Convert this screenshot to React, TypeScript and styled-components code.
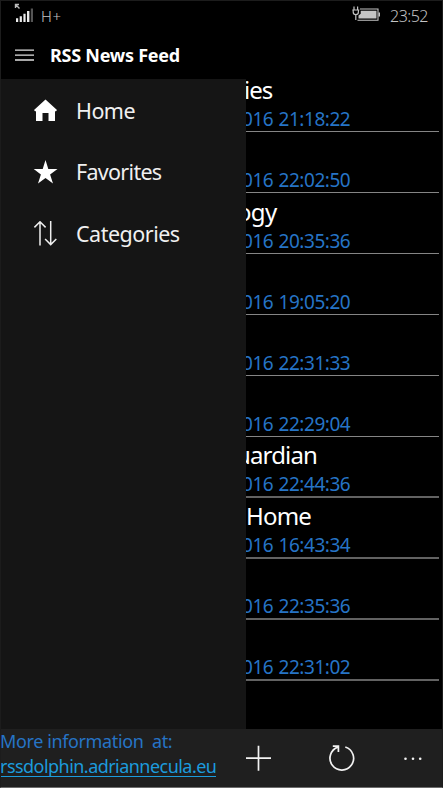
import React from "react";
import styled, { createGlobalStyle } from "styled-components";

const Global = createGlobalStyle`
  * { box-sizing: border-box; }
  body { margin: 0; background: #000; }
`;

const Phone = styled.div`
  width: 443px;
  height: 788px;
  display: flex;
  flex-direction: column;
  overflow: hidden;
  background: #000;
  color: #fff;
  border: 1px solid #1c1c1c;
  border-bottom-color: #6c6c6c;
  font-family: "Noto Sans", "Open Sans", sans-serif;
  white-space: pre;
`;

const StatusBar = styled.header`
  height: 29px;
  flex: none;
  display: flex;
  align-items: flex-start;
  padding: 2px 14px 0 13px;
  color: #c4c4c4;
`;

const StatusText = styled.span<{ $size: number; $spacing: number; $indent: number }>`
  font-size: ${(p) => p.$size}px;
  letter-spacing: ${(p) => p.$spacing}px;
  margin-left: ${(p) => p.$indent}px;
  line-height: 26px;
  font-weight: 300;
`;

const Spacer = styled.div`
  flex: 1;
`;

const TitleBar = styled.div`
  height: 49px;
  flex: none;
  display: flex;
  align-items: center;
  padding-left: 14px;
  gap: 15px;
`;

const Title = styled.h1`
  margin: 0;
  font-size: 18px;
  line-height: 26px;
  font-weight: 700;
  letter-spacing: -0.25px;
`;

const Body = styled.main`
  height: 650px;
  flex: none;
  display: flex;
`;

const Drawer = styled.nav`
  width: 245px;
  flex: none;
  background: #151515;
  padding-top: 1px;
`;

const MenuItem = styled.div`
  height: 61.5px;
  display: flex;
  align-items: center;
  padding-left: 32px;
  gap: 18px;
`;

const MenuLabel = styled.span<{ $spacing: number }>`
  font-size: 21.5px;
  line-height: 30px;
  letter-spacing: ${(p) => p.$spacing}px;
  color: #f0f0f0;
`;

const Feed = styled.section`
  flex: 1;
  overflow: hidden;
`;

const FeedList = styled.div`
  margin-top: -8px;
  margin-right: 3px;
`;

const FeedRow = styled.article<{ $heavy: boolean }>`
  height: 61px;
  display: flex;
  flex-direction: column;
  justify-content: flex-end;
  border-bottom: ${(p) => (p.$heavy ? "2px solid #626262" : "1px solid #858585")};
`;

const FeedName = styled.div<{ $shift: number; $spacing: number }>`
  height: 35px;
  line-height: 35px;
  font-size: 24px;
  letter-spacing: ${(p) => p.$spacing}px;
  margin-left: ${(p) => p.$shift}px;
`;

const FeedDate = styled.div`
  height: 24px;
  line-height: 24px;
  font-size: 19px;
  letter-spacing: -0.47px;
  word-spacing: 0.9px;
  margin-left: -4px;
  color: #2674c6;
`;

const Footer = styled.footer`
  flex: 1;
  display: flex;
  background: #1f1f1f;
`;

const Info = styled.div`
  width: 233px;
`;

const InfoLine = styled.div`
  font-size: 18px;
  line-height: 25px;
  letter-spacing: -0.38px;
  margin-left: -1px;
  color: #2674c6;
`;

const InfoLink = styled.a`
  display: inline-block;
  font-size: 18px;
  line-height: 24px;
  height: 23px;
  letter-spacing: -0.54px;
  margin-left: -1px;
  color: #1c9bdc;
  border-bottom: 1px solid #1c9bdc;
`;

const Commands = styled.div`
  flex: 1;
  display: flex;
  padding: 16px 19px 0 11px;
`;

const CommandButton = styled.div<{ $gap: number }>`
  height: 28px;
  margin-left: ${(p) => p.$gap}px;
`;

const feeds = [
  { name: "ies", shift: -2, spacing: -1, date: "016 21:18:22" },
  { name: "", shift: 0, spacing: 0, date: "016 22:02:50" },
  { name: "ogy", shift: -9, spacing: -0.7, date: "016 20:35:36" },
  { name: "", shift: 0, spacing: 0, date: "016 19:05:20" },
  { name: "", shift: 0, spacing: 0, date: "016 22:31:33" },
  { name: "", shift: 0, spacing: 0, date: "016 22:29:04" },
  { name: "uardian", shift: -10, spacing: -0.85, date: "016 22:44:36" },
  { name: "Home", shift: 0, spacing: -0.8, date: "016 16:43:34" },
  { name: "", shift: 0, spacing: 0, date: "016 22:35:36" },
  { name: "", shift: 0, spacing: 0, date: "016 22:31:02" },
];

const SignalIcon = () => (
  <svg width="20" height="20" viewBox="0 0 20 20">
    <path d="M1.5 5V1.5H5M1.5 1.5L5.5 5.5" stroke="#bbb" strokeWidth="1.4" fill="none" />
    <path d="M2 15.3h2.2V19H2zM5.7 13.3h2.2V19H5.7zM9.4 10.8h2.2V19H9.4zM13 8h2.4v11H13z" fill="#ececec" />
    <path d="M16.8 5.5h2.2V19h-2.2z" fill="#555" />
  </svg>
);

const BatteryIcon = () => (
  <svg width="29" height="20" viewBox="0 0 29 20">
    <path d="M2 3.5v3M5.6 3.5v3M.3 7h7M1.2 7v2q0 2.6 2.6 2.6T6.4 9V7M3.8 11.6V17" stroke="#c4c4c4" strokeWidth="1.2" fill="none" />
    <path d="M8 6h18v11.2H5.5" stroke="#c4c4c4" strokeWidth="1.1" fill="none" />
    <path d="M8.7 7.8h15.8v7.6h-18v-3l2.2-1.6z" fill="#c4c4c4" />
    <path d="M26.5 9.5H28v4h-1.5z" fill="#c4c4c4" />
  </svg>
);

const HamburgerIcon = () => (
  <svg width="20" height="14" viewBox="0 0 20 14">
    <path d="M0 2.1h19M0 7.1h19M0 12h19" stroke="#e0e0e0" strokeWidth="1.3" />
  </svg>
);

const HomeIcon = () => (
  <svg width="25" height="25" viewBox="0 0 25 25">
    <path d="M12.5 1.5L24 12l-1 1.2h-1V23h-6.5v-8h-6v8H3v-9.8H2L1 12z" fill="#fff" />
  </svg>
);

const StarIcon = () => (
  <svg width="25" height="25" viewBox="0 0 25 25">
    <path d="M12.5 0l2.8 9H24.5l-7.4 5.5L20 23.5l-7.5-5.6L5 23.5l2.9-9L.7 9h9z" fill="#fff" />
  </svg>
);

const SortIcon = () => (
  <svg width="25" height="25" viewBox="0 0 25 25">
    <path d="M7 24.5V.8M1.4 6.4L7 .8l5.6 5.6M17.7 0v23.5M12.1 18l5.6 5.6 5.6-5.6" stroke="#eee" strokeWidth="1.5" fill="none" />
  </svg>
);

const PlusIcon = () => (
  <svg width="27" height="27" viewBox="0 0 27 27">
    <path d="M13.5 .7v25M1 13.2h25" stroke="#f2f2f2" strokeWidth="1.7" />
  </svg>
);

const RefreshIcon = () => (
  <svg width="28" height="28" viewBox="0 0 28 28">
    <path d="M17.3 2A11.8 11.8 0 1 1 10 2.1" stroke="#f2f2f2" strokeWidth="1.7" fill="none" />
    <path d="M4.8 1.2h5.6v5.8" stroke="#f2f2f2" strokeWidth="1.7" fill="none" />
  </svg>
);

const MoreIcon = () => (
  <svg width="20" height="28" viewBox="0 0 20 28">
    <g fill="#f2f2f2">
      <circle cx="2.5" cy="13.7" r="1.3" />
      <circle cx="10" cy="13.7" r="1.3" />
      <circle cx="17.2" cy="13.7" r="1.3" />
    </g>
  </svg>
);

export default function App() {
  return (
    <>
      <Global />
      <Phone>
        <StatusBar>
          <SignalIcon />
          <StatusText $size={15} $spacing={0.6} $indent={7}>H+</StatusText>
          <Spacer />
          <BatteryIcon />
          <StatusText $size={16} $spacing={-0.5} $indent={9}>23:52</StatusText>
        </StatusBar>
        <TitleBar>
          <HamburgerIcon />
          <Title>RSS News Feed</Title>
        </TitleBar>
        <Body>
          <Drawer>
            <MenuItem><HomeIcon /><MenuLabel $spacing={-0.55}>Home</MenuLabel></MenuItem>
            <MenuItem><StarIcon /><MenuLabel $spacing={-0.7}>Favorites</MenuLabel></MenuItem>
            <MenuItem><SortIcon /><MenuLabel $spacing={-0.5}>Categories</MenuLabel></MenuItem>
          </Drawer>
          <Feed>
            <FeedList>
              {feeds.map((feed, i) => (
                <FeedRow key={feed.date} $heavy={i > 5}>
                  <FeedName $shift={feed.shift} $spacing={feed.spacing}>{feed.name}</FeedName>
                  <FeedDate>{feed.date}</FeedDate>
                </FeedRow>
              ))}
            </FeedList>
          </Feed>
        </Body>
        <Footer>
          <Info>
            <InfoLine>{"More information  at:"}</InfoLine>
            <InfoLink>rssdolphin.adriannecula.eu</InfoLink>
          </Info>
          <Commands>
            <CommandButton $gap={0}><PlusIcon /></CommandButton>
            <CommandButton $gap={56}><RefreshIcon /></CommandButton>
            <CommandButton $gap={47}><MoreIcon /></CommandButton>
          </Commands>
        </Footer>
      </Phone>
    </>
  );
}
